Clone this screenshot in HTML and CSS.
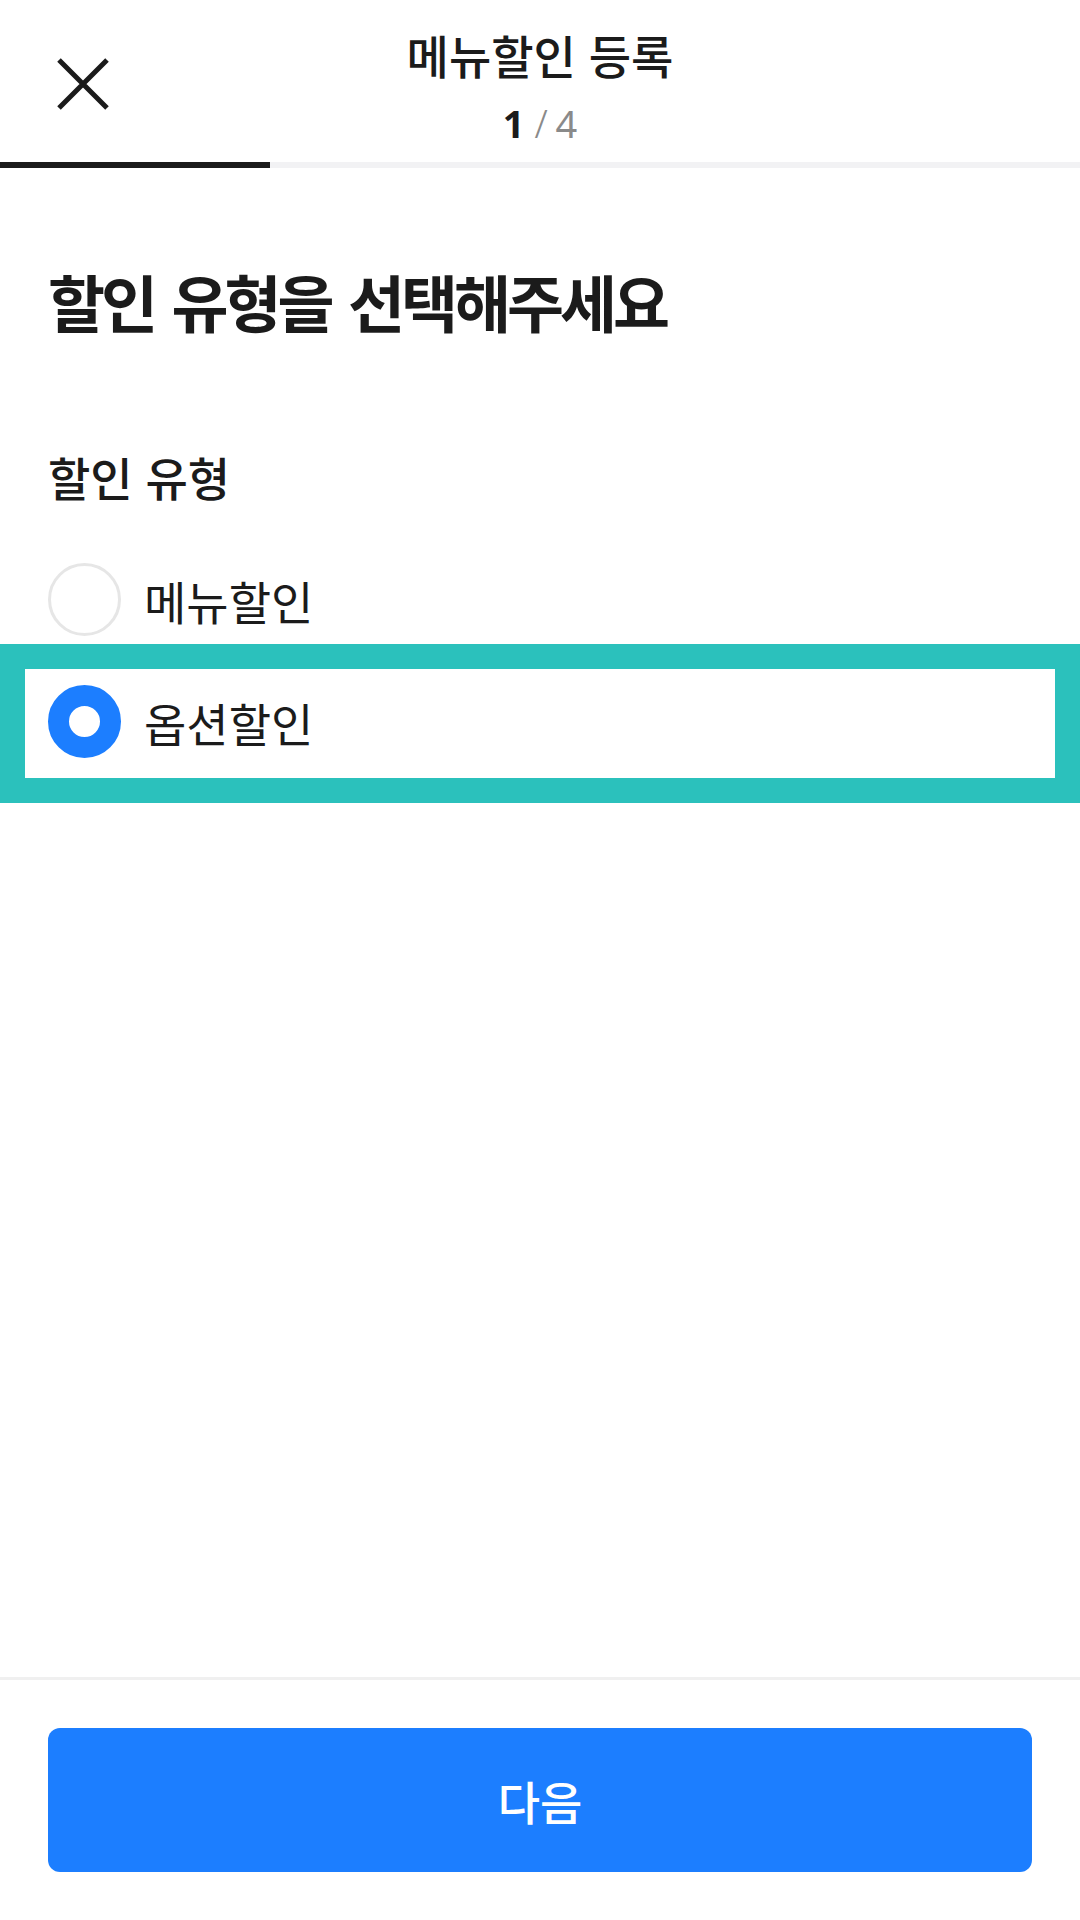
FILE: index.html
```html
<!DOCTYPE html>
<html lang="ko">
<head>
<meta charset="utf-8">
<link rel="stylesheet" href="styles.css">
</head>
<body>
<div class="page">
  <header class="topbar">
    <button class="close" aria-label="닫기">
      <svg viewBox="0 0 52 52" width="52" height="52"><path d="M2 2 L50 50 M50 2 L2 50" stroke="#1b1b1b" stroke-width="5" fill="none"/></svg>
    </button>
    <div class="titles">
      <div class="title">메뉴할인 등록</div>
      <div class="step"><b>1</b><span class="slash">/</span><span class="total">4</span></div>
    </div>
    <div class="spacer"></div>
  </header>
  <div class="progress"><div class="progress-fill" style="width:25%"></div></div>

  <main class="content">
    <h1 class="heading">할인 유형을 선택해주세요</h1>
    <div class="label">할인 유형</div>
    <div class="options">
      <div class="option">
        <span class="radio"></span>
        <span class="option-text">메뉴할인</span>
      </div>
      <div class="option selected">
        <span class="radio on"></span>
        <span class="option-text">옵션할인</span>
      </div>
    </div>
  </main>

  <footer class="footer">
    <button class="next">다음</button>
  </footer>
</div>
</body>
</html>
```
FILE: styles.css
```css
* { box-sizing: border-box; }
html, body { margin: 0; padding: 0; background: #fff; }
body {
  font-family: "Noto Sans CJK KR", "Noto Sans", sans-serif;
  color: #1b1b1b;
}
.page {
  width: 1080px;
  height: 1920px;
  display: flex;
  flex-direction: column;
}
.topbar {
  height: 162px;
  display: grid;
  grid-template-columns: 160px 1fr 160px;
  align-items: start;
}
.close {
  margin: 58px 0 0 57px;
  padding: 0;
  border: 0;
  background: none;
  width: 52px;
  height: 52px;
  display: block;
}
.close svg { display: block; }
.titles {
  display: flex;
  flex-direction: column;
  align-items: center;
  padding-top: 28px;
}
.title {
  font-size: 46px;
  font-weight: 500;
  line-height: 52px;
}
.step {
  margin-top: 23px;
  font-family: "Noto Sans", sans-serif;
  font-size: 38px;
  line-height: 40px;
  display: flex;
  align-items: baseline;
}
.step b { font-weight: 700; color: #1b1b1b; }
.step .slash { color: #8a8a8a; margin: 0 8px 0 10px; font-weight: 300; }
.step .total { color: #8a8a8a; }
.progress {
  height: 6px;
  background: #f2f2f4;
}
.progress-fill {
  height: 100%;
  background: #1b1b1b;
}
.content {
  flex: 1;
  padding: 98px 48px 0;
}
.heading {
  margin: 0;
  font-size: 62px;
  font-weight: 700;
  line-height: 70px;
  letter-spacing: -4px;
  word-spacing: 4px;
}
.label {
  margin-top: 114px;
  font-size: 46px;
  font-weight: 500;
  line-height: 52px;
}
.options {
  margin-top: 61px;
  display: flex;
  flex-direction: column;
  gap: 49px;
}
.option {
  position: relative;
  display: flex;
  align-items: center;
  gap: 23px;
  height: 73px;
}
.option.selected::before {
  content: "";
  position: absolute;
  top: -41px;
  bottom: -45px;
  left: -48px;
  right: -48px;
  border: 25px solid #2bc1bc;
  pointer-events: none;
}
.radio {
  width: 73px;
  height: 73px;
  border-radius: 50%;
  border: 3px solid #e6e6e6;
  background: #fff;
  flex: none;
}
.radio.on {
  border: 21px solid #1c7eff;
}
.option-text {
  font-size: 46px;
  font-weight: 400;
  line-height: 52px;
}
.footer {
  height: 243px;
  border-top: 3px solid #f0f0f0;
  padding: 48px 48px 0;
}
.next {
  width: 984px;
  height: 144px;
  border: 0;
  border-radius: 12px;
  background: #1c7eff;
  color: #fff;
  font-family: "Noto Sans CJK KR", "Noto Sans", sans-serif;
  font-size: 46px;
  font-weight: 500;
  display: block;
}
```
